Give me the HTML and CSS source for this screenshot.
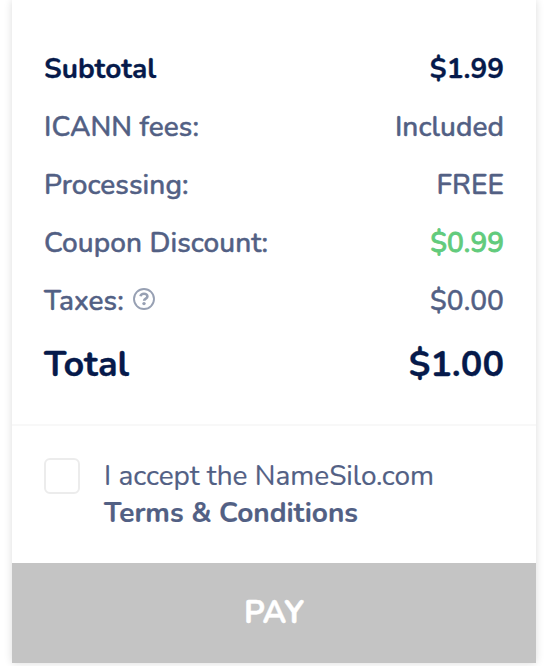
FILE: index.html
```
<!DOCTYPE html>
<html lang="en">
<head>
  <meta charset="UTF-8" />
  <meta name="viewport" content="width=device-width, initial-scale=1.0" />
  <title>Order Summary</title>
  <link rel="stylesheet" href="styles.css">
</head>
<body>
  <div class="card">
    <div class="summary">
      <div class="row subtotal">
        <span class="label">Subtotal</span>
        <span class="value">$1.99</span>
      </div>
      <div class="row">
        <span class="label">ICANN fees:</span>
        <span class="value">Included</span>
      </div>
      <div class="row">
        <span class="label">Processing:</span>
        <span class="value">FREE</span>
      </div>
      <div class="row discount">
        <span class="label">Coupon Discount:</span>
        <span class="value">$0.99</span>
      </div>
      <div class="row">
        <div class="label-group">
          <span class="label">Taxes:</span>
          <svg class="help" width="22" height="22" viewBox="0 0 22 22" fill="none" stroke="#97a0b3">
            <circle cx="11" cy="11" r="10" stroke-width="1.9" />
            <path d="M7.5 8.3C7.9 6.5 9.3 5.8 11 5.8c2 0 3.4 1 3.4 2.6 0 2.2-3.3 2.2-3.3 4.4" stroke-width="2.6" />
            <circle cx="11" cy="15.6" r="1.7" fill="#97a0b3" stroke="none" />
          </svg>
        </div>
        <span class="value">$0.00</span>
      </div>
      <div class="row total">
        <span class="label">Total</span>
        <span class="value">$1.00</span>
      </div>
    </div>

    <label class="terms">
      <input type="checkbox" class="checkbox" />
      <span class="terms-text">
        <span>I accept the NameSilo.com</span>
        <strong>Terms &amp; Conditions</strong>
      </span>
    </label>

    <button class="pay-btn">PAY</button>
  </div>
</body>
</html>
```

FILE: styles.css
```
* {
  margin: 0;
  padding: 0;
  box-sizing: border-box;
}
body {
  font-family: Nunito, 'Noto Sans', sans-serif;
  background: #fff;
  color: #526084;
  font-size: 28px;
  height: 666px;
  overflow: hidden;
}
.card {
  width: 524px;
  height: 663px;
  margin-left: 12px;
  display: flex;
  flex-direction: column;
  background: #fff;
  box-shadow: 0 0 8px rgba(0, 0, 0, 0.14);
}
.summary {
  height: 426px;
  padding: 50px 32px 0;
  border-bottom: 2px solid #f8f8f8;
}
.row {
  display: flex;
  justify-content: space-between;
  align-items: center;
  line-height: 38px;
  margin-bottom: 20px;
  font-weight: 500;
  letter-spacing: 0.08px;
  white-space: nowrap;
  -webkit-text-stroke: 0.5px;
}
.label-group {
  display: flex;
  align-items: flex-start;
  gap: 9px;
}
.help {
  display: block;
  margin-top: 6px;
}
.subtotal,
.total {
  color: #061a4b;
  font-weight: 700;
  letter-spacing: 0;
  -webkit-text-stroke: 0.3px;
}
.discount .value {
  color: #62cb7c;
  letter-spacing: 0;
  -webkit-text-stroke: 0.9px;
}
.total {
  font-size: 36px;
  line-height: 50px;
}
.terms {
  flex: 1;
  display: flex;
  align-items: flex-start;
  gap: 24px;
  padding: 32px 32px 0;
}
.checkbox {
  appearance: none;
  width: 36px;
  height: 36px;
  border: 2px solid #ececec;
  border-radius: 6px;
  background: #fff;
}
.terms-text {
  line-height: 37px;
  white-space: nowrap;
  -webkit-text-stroke: 0.2px;
}
.terms-text > * {
  display: block;
}
.pay-btn {
  height: 100px;
  padding-bottom: 2px;
  border: none;
  background: #c4c4c4;
  color: #fff;
  font-family: inherit;
  font-size: 32px;
  font-weight: 700;
  -webkit-text-stroke: 0.4px;
}
```
